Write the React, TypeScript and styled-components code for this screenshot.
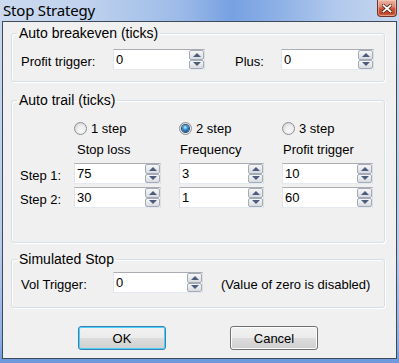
import styled, { createGlobalStyle, css } from 'styled-components';

const GlobalStyle = createGlobalStyle`
  html, body {
    margin: 0;
    padding: 0;
    background: #ffffff;
  }
  body {
    font-family: "Liberation Sans", Arial, sans-serif;
    font-size: 13px;
    color: #000;
  }
`;

const Window = styled.div`
  width: 399px;
  height: 363px;
  display: flex;
  flex-direction: column;
  background: linear-gradient(to bottom, #c8d8ef 0%, #b6cbec 70%, #8aaee4 94%, #6c97dc 100%);
`;

const TitleBar = styled.div`
  height: 21px;
  flex: none;
  display: flex;
  align-items: flex-start;
  justify-content: space-between;
  padding: 0 2px 0 3px;
  background: linear-gradient(90deg, #cbdaef 0%, #bfd1ee 22%, #9dbbe8 45%, #77a1e2 58%, #8eb1e6 70%, #b3caed 85%, #c6d6ef 100%);
`;

const Title = styled.span`
  font-family: "Noto Sans", "Liberation Sans", sans-serif;
  font-size: 15px;
  line-height: 20px;
  letter-spacing: -0.2px;
`;

const CloseButton = styled.div`
  width: 20px;
  height: 17px;
  box-sizing: border-box;
  border: 1px solid #6e3426;
  border-top: none;
  border-radius: 0 0 4px 4px;
  background: linear-gradient(to bottom, #eab3a4 0%, #de8b74 40%, #c9543a 55%, #c14529 85%, #d5755b 100%);
  box-shadow: inset 0 0 0 1px rgba(255, 220, 200, 0.45);
  display: flex;
  align-items: center;
  justify-content: center;
`;

const Client = styled.div`
  flex: 1;
  margin: 0 2px 4px;
  border: 1px solid #3f4a58;
  background: #f0f0f0;
  display: flex;
  flex-direction: column;
  padding: 0 0 0 8px;
`;

const Group = styled.fieldset<{ $top: number }>`
  width: 374px;
  box-sizing: border-box;
  margin: ${p => p.$top}px 0 0 0;
  padding: 0;
  min-width: 0;
  border: 1px solid #d5dfe5;
  border-radius: 3px;
  box-shadow: inset 1px 1px 0 #ffffff, 1px 1px 0 #ffffff;
`;

const Legend = styled.legend`
  font-size: 14px;
  line-height: 16px;
  margin-left: 5px;
  padding: 0 2px;
`;

const BreakevenRow = styled.div`
  display: grid;
  grid-template-columns: 92px 92px 30px 46px 92px;
  padding: 8px 0 9px 9px;
`;

const TrailGrid = styled.div`
  display: grid;
  grid-template-columns: 36px 87px 85px 91px;
  grid-template-rows: 23px 21px 24px 21px;
  column-gap: 18px;
  align-items: start;
  padding: 11px 0 34px 8px;
`;

const SimRow = styled.div`
  display: grid;
  grid-template-columns: 92px 90px auto;
  padding: 5px 0 12px 9px;
`;

const Label = styled.span`
  line-height: 21px;
  padding-top: 2px;
  white-space: nowrap;
`;

const Note = styled(Label)`
  margin-left: 18px;
`;

const Header = styled.span<{ $offset?: number }>`
  line-height: 15px;
  padding-left: ${p => p.$offset ?? 3}px;
  white-space: nowrap;
`;

const RadioLabel = styled.label`
  display: flex;
  align-items: center;
  gap: 4px;
  height: 16px;
  padding-top: 1px;
  white-space: nowrap;
`;

const RadioCircle = styled.span<{ $checked?: boolean }>`
  width: 13px;
  height: 13px;
  box-sizing: border-box;
  border-radius: 50%;
  border: 1px solid #8c8f94;
  background: radial-gradient(circle at 60% 65%, #fbfbfb 0%, #ececec 45%, #c9cbcd 100%);
  display: flex;
  align-items: center;
  justify-content: center;

  ${p =>
    p.$checked &&
    css`
      &::after {
        content: '';
        width: 7px;
        height: 7px;
        border-radius: 50%;
        background: radial-gradient(circle at 45% 35%, #c6ecff 0%, #4fa6e0 30%, #0f4a86 75%, #0a2f58 100%);
        box-shadow: 0 0 0 1px #2a4d72;
      }
    `}
`;

const SpinBox = styled.div<{ $width: number }>`
  width: ${p => p.$width}px;
  height: 21px;
  box-sizing: border-box;
  display: flex;
  border: 1px solid #abadb3;
  border-right-color: #dbdfe6;
  border-bottom-color: #e3e9ef;
  border-left-color: #e2e3ea;
  background: #ffffff;
`;

const SpinText = styled.span`
  flex: 1;
  padding-left: 2px;
  line-height: 19px;
`;

const SpinButtons = styled.div`
  width: 15px;
  display: flex;
  flex-direction: column;
`;

const SpinButton = styled.div<{ $down?: boolean }>`
  flex: 1;
  box-sizing: border-box;
  border: 1px solid #a3aab8;
  border-radius: 2px;
  background: linear-gradient(to bottom, #f7f7f7 0%, #e9e9e9 50%, #d9dbe0 100%);
  display: flex;
  align-items: center;
  justify-content: center;

  &::before {
    content: '';
    width: 0;
    height: 0;
    border-left: 4px solid transparent;
    border-right: 4px solid transparent;
    ${p =>
      p.$down
        ? css`border-top: 4px solid #4c5c7e;`
        : css`border-bottom: 4px solid #4c5c7e;`}
  }
`;

const ButtonRow = styled.div`
  display: flex;
  justify-content: center;
  gap: 64px;
  width: 374px;
  margin-top: 18px;
`;

const Button = styled.button<{ $default?: boolean }>`
  width: 88px;
  height: 24px;
  box-sizing: border-box;
  border: 1px solid ${p => (p.$default ? '#3c7fb1' : '#707070')};
  border-radius: 3px;
  background: linear-gradient(to bottom, #f2f2f2 0%, #ebebeb 50%, #dddddd 51%, #cfcfcf 100%);
  box-shadow: inset 0 0 0 1px ${p => (p.$default ? '#48d1f9' : '#fcfcfc')};
  font-family: "Liberation Sans", Arial, sans-serif;
  font-size: 13px;
  color: #000;
  padding: 0;
`;

function Spin({ value, width }: { value: string; width: number }) {
  return (
    <SpinBox $width={width}>
      <SpinText>{value}</SpinText>
      <SpinButtons>
        <SpinButton />
        <SpinButton $down />
      </SpinButtons>
    </SpinBox>
  );
}

function Radio({ label, checked }: { label: string; checked?: boolean }) {
  return (
    <RadioLabel>
      <RadioCircle $checked={checked} />
      {label}
    </RadioLabel>
  );
}

export default function App() {
  return (
    <>
      <GlobalStyle />
      <Window>
        <TitleBar>
          <Title>Stop Strategy</Title>
          <CloseButton>
            <svg width="10" height="9" viewBox="0 0 10 9">
              <path d="M1.5 1.5 L8.5 7.5 M8.5 1.5 L1.5 7.5" stroke="#5a2316" strokeWidth="3.4" strokeLinecap="square" />
              <path d="M1.5 1.5 L8.5 7.5 M8.5 1.5 L1.5 7.5" stroke="#ffffff" strokeWidth="1.8" strokeLinecap="square" />
            </svg>
          </CloseButton>
        </TitleBar>
        <Client>
          <Group $top={3}>
            <Legend>Auto breakeven (ticks)</Legend>
            <BreakevenRow>
              <Label>Profit trigger:</Label>
              <Spin value="0" width={92} />
              <span />
              <Label>Plus:</Label>
              <Spin value="0" width={93} />
            </BreakevenRow>
          </Group>

          <Group $top={10}>
            <Legend>Auto trail (ticks)</Legend>
            <TrailGrid>
              <span />
              <Radio label="1 step" />
              <Radio label="2 step" checked />
              <Radio label="3 step" />

              <span />
              <Header>Stop loss</Header>
              <Header $offset={1}>Frequency</Header>
              <Header $offset={1}>Profit trigger</Header>

              <Label>Step 1:</Label>
              <Spin value="75" width={87} />
              <Spin value="3" width={85} />
              <Spin value="10" width={91} />

              <Label>Step 2:</Label>
              <Spin value="30" width={87} />
              <Spin value="1" width={85} />
              <Spin value="60" width={91} />
            </TrailGrid>
          </Group>

          <Group $top={8}>
            <Legend>Simulated Stop</Legend>
            <SimRow>
              <Label>Vol Trigger:</Label>
              <Spin value="0" width={90} />
              <Note>(Value of zero is disabled)</Note>
            </SimRow>
          </Group>

          <ButtonRow>
            <Button $default>OK</Button>
            <Button>Cancel</Button>
          </ButtonRow>
        </Client>
      </Window>
    </>
  );
}
